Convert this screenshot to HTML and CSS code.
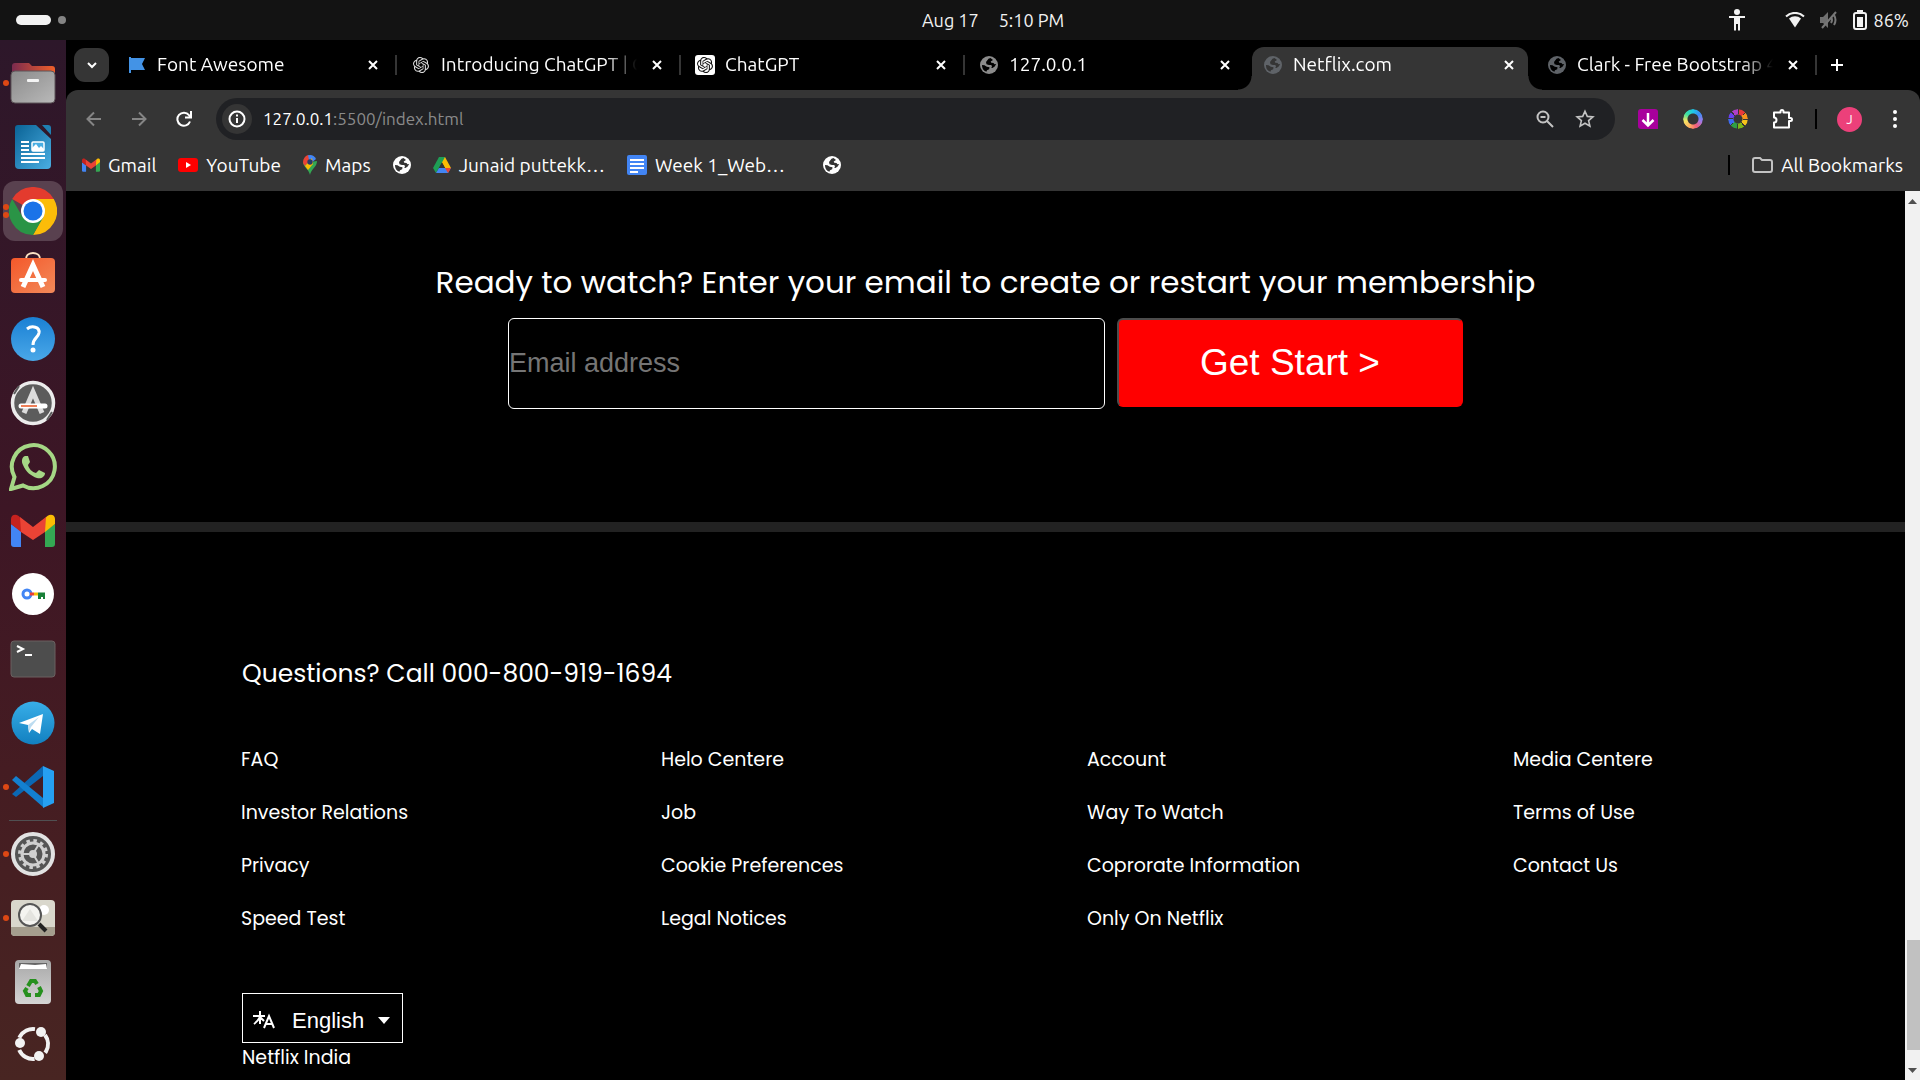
FILE: index.html
```html
<!DOCTYPE html>
<html lang="en">
<head>
<meta charset="utf-8">
<title>Netflix.com</title>
<link rel="stylesheet" href="styles.css">
</head>
<body>
<svg class="defs" aria-hidden="true">
  <defs>
    <symbol id="globe" viewBox="0 0 18 18"><circle cx="9" cy="9" r="9" fill="currentColor"/><path d="M10.500 2 8.500 2.800 6 6l.5 2.200 2.500.8 2.300 0 .7 1.500-.8 1.300 1.300.2 2.200-1.500 1.500-2.500-1.700.3-1-1.300-2.200-.3-.6-1.200 2.300-1.500ZM2 9l2.500.3 2.300 1.500 2.700.5-.3 2-2.200 1-.6 1.500A7 7 0 0 1 2 9Z" fill="var(--hole)"/></symbol>
    <symbol id="close" viewBox="0 0 12 12"><path d="M2 2l8 8M10 2l-8 8" stroke="currentColor" stroke-width="2" fill="none"/></symbol>
    <symbol id="openai" viewBox="0 0 24 24"><path fill="currentColor" d="M22.2819 9.8211a5.9847 5.9847 0 0 0-.5157-4.9108 6.0462 6.0462 0 0 0-6.5098-2.9A6.0651 6.0651 0 0 0 4.9807 4.1818a5.9847 5.9847 0 0 0-3.9977 2.9 6.0462 6.0462 0 0 0 .7427 7.0966 5.98 5.98 0 0 0 .511 4.9107 6.051 6.051 0 0 0 6.5146 2.9001A5.9847 5.9847 0 0 0 13.2599 24a6.0557 6.0557 0 0 0 5.7718-4.2058 5.9894 5.9894 0 0 0 3.9977-2.9001 6.0557 6.0557 0 0 0-.7475-7.073zm-9.022 12.6081a4.4755 4.4755 0 0 1-2.8764-1.0408l.1419-.0804 4.7783-2.7582a.7948.7948 0 0 0 .3927-.6813v-6.7369l2.02 1.1686a.071.071 0 0 1 .038.052v5.5826a4.504 4.504 0 0 1-4.4945 4.4944zm-9.6607-4.1254a4.4708 4.4708 0 0 1-.5346-3.0137l.142.0852 4.783 2.7582a.7712.7712 0 0 0 .7806 0l5.8428-3.3685v2.3324a.0804.0804 0 0 1-.0332.0615L9.74 19.9502a4.4992 4.4992 0 0 1-6.1408-1.6464zM2.3408 7.8956a4.485 4.485 0 0 1 2.3655-1.9728V11.6a.7664.7664 0 0 0 .3879.6765l5.8144 3.3543-2.0201 1.1685a.0757.0757 0 0 1-.071 0l-4.8303-2.7865A4.504 4.504 0 0 1 2.3408 7.872zm16.5963 3.8558L13.1038 8.364 15.1192 7.2a.0757.0757 0 0 1 .071 0l4.8303 2.7913a4.4944 4.4944 0 0 1-.6765 8.1042v-5.6772a.79.79 0 0 0-.407-.667zm2.0107-3.0231l-.142-.0852-4.7735-2.7818a.7759.7759 0 0 0-.7854 0L9.409 9.2297V6.8974a.0662.0662 0 0 1 .0284-.0615l4.8303-2.7866a4.4992 4.4992 0 0 1 6.6802 4.66zM8.3065 12.863l-2.02-1.1638a.0804.0804 0 0 1-.038-.0567V6.0742a4.4992 4.4992 0 0 1 7.3757-3.4537l-.142.0805L8.704 5.459a.7948.7948 0 0 0-.3927.6813zm1.0976-2.3654l2.602-1.4998 2.6069 1.4998v2.9994l-2.5974 1.4997-2.6067-1.4997Z"/></symbol>
    <symbol id="gmail" viewBox="0 0 44 33"><path d="M0 10v20a3 3 0 0 0 3 3h7V17Z" fill="#4285f4"/><path d="M34 17v16h7a3 3 0 0 0 3-3V10Z" fill="#34a853"/><path d="M0 5v5l10 8V5C7-1 0 0 0 5Z" fill="#c5221f"/><path d="M44 5v5l-10 8V5c3-6 10-5 10 0Z" fill="#fbbc04"/><path d="M9 3l13 10L35 3l-1 15-12 8-12-8Z" fill="#ea4335"/></symbol>
    <linearGradient id="g-grey" x1="0" y1="0" x2="1" y2="1"><stop offset="0" stop-color="#8b8b8b"/><stop offset="1" stop-color="#b9b9b9"/></linearGradient>
    <linearGradient id="g-folder"><stop offset="0" stop-color="#7b2a4e"/><stop offset="1" stop-color="#f0602a"/></linearGradient>
    <linearGradient id="g-orange" x1="0" y1="0" x2="1" y2="1"><stop offset="0" stop-color="#f4582a"/><stop offset="1" stop-color="#f28a5a"/></linearGradient>
    <linearGradient id="g-blue" x1="0" y1="0" x2="0" y2="1"><stop offset="0" stop-color="#1a80d4"/><stop offset="1" stop-color="#4aa8e8"/></linearGradient>
    <linearGradient id="g-tg" x1="0" y1="0" x2="0" y2="1"><stop offset="0" stop-color="#38aee8"/><stop offset="1" stop-color="#1280c0"/></linearGradient>
    <linearGradient id="g-doc" x1="0" y1="0" x2="1" y2="1"><stop offset="0" stop-color="#0a6396"/><stop offset="1" stop-color="#4aaee2"/></linearGradient>
    <linearGradient id="g-trash" x1="0" y1="0" x2="0" y2="1"><stop offset="0" stop-color="#a8a8a8"/><stop offset="1" stop-color="#d4d4d4"/></linearGradient>
  </defs>
</svg>

<header class="topbar">
  <div class="workspaces"><span class="pill"></span><span class="dot"></span></div>
  <div class="clock"><span>Aug 17</span><span>5:10 PM</span></div>
  <div class="status">
    <svg class="access" width="16" height="22" viewBox="0 0 16 22"><circle cx="8" cy="3" r="3" fill="#f2f2f2"/><path d="M0 7h16v2h-5V21.500H9V15H7v6.500H5V9H0Z" fill="#f2f2f2"/></svg>
    <svg width="20" height="16" viewBox="0 0 20 16"><path d="M4 6.500a9 9 0 0 1 12 0L10 15.500Z" fill="#f2f2f2"/><path d="M1 4.500a13 13 0 0 1 18 0" fill="none" stroke="#f2f2f2" stroke-width="2"/></svg>
    <svg class="mute" width="20" height="18" viewBox="0 0 20 18"><path d="M1 6h3l5-5v16l-5-5H1Z" fill="#6f6f6f"/><path d="M12 6q2 3 0 6M15 4q3 5 0 10M3 17 17 1" fill="none" stroke="#777" stroke-width="2"/></svg>
    <svg width="14" height="20" viewBox="0 0 14 20"><rect x="1" y="3" width="12" height="16" rx="2" fill="none" stroke="#f2f2f2" stroke-width="2"/><rect x="4" y="0" width="6" height="3" fill="#f2f2f2"/><rect x="4" y="7" width="6" height="10" fill="#f2f2f2"/></svg>
    <span>86%</span>
  </div>
</header>

<div class="desktop">
  <nav class="dock" aria-label="Dock">
    <button class="app run1" aria-label="Files"><svg viewBox="0 0 48 48"><path d="M3 20V7q0-3 3-3h14l3 3h20q3 0 3 3v10Z" fill="url(#g-folder)"/><rect x="2" y="12" width="44" height="32" rx="4" fill="url(#g-grey)" stroke="#5d5558"/><rect x="18" y="20" width="12" height="3" rx="1" fill="#f4f4f4"/></svg></button>
    <button class="app" aria-label="Writer"><svg viewBox="0 0 48 48"><path d="M9 2h18l15 14v26q0 4-4 4H10q-4 0-4-4V5q0-3 3-3Z" fill="url(#g-doc)"/><path d="M33 2h6q3 0 3 3v7Z" fill="#1f7fb2"/><path d="M12 19h8M12 23h8M12 27h8M12 31h24M12 35h24M12 39h18" stroke="#fff" stroke-width="2"/><rect x="23" y="19" width="12" height="9" rx="1" fill="#4aaee2" stroke="#fff" stroke-width="1.500"/><path d="M23 28v-3l4-4 3 4 2-2 3 3v2Z" fill="#fff"/></svg></button>
    <button class="app run2 current" aria-label="Chrome"><svg viewBox="0 0 48 48"><path d="M24 24 3.200 12A24 24 0 0 1 44.800 12Z" fill="#e33b2e"/><path d="M24 24V12h20.800A24 24 0 0 1 24 48l10-18Z" fill="#fbbc09"/><path d="M24 24l10.400 6L24 48A24 24 0 0 1 3.200 12l10.400 18Z" fill="#2a9446"/><circle cx="24" cy="24" r="12" fill="#fff"/><circle cx="24" cy="24" r="9.500" fill="#1a73e8"/></svg></button>
    <button class="app" aria-label="App Center"><svg viewBox="0 0 48 48"><path d="M17 8c0-8 14-8 14 0" fill="none" stroke="#fbe3c4" stroke-width="2"/><rect x="2" y="7" width="44" height="35" rx="4" fill="url(#g-orange)"/><path d="M14 36 24 14l10 22" fill="none" stroke="#fff" stroke-width="5"/><path d="M12 29h24" stroke="#fff" stroke-width="4" stroke-linecap="round"/></svg></button>
    <button class="app" aria-label="Help"><svg viewBox="0 0 48 48"><circle cx="24" cy="24" r="22" fill="url(#g-blue)"/><path d="M18 14c5-4 13-2 12 4-1 5-6 5-6 12" fill="none" stroke="#fff" stroke-width="3"/><circle cx="24" cy="35" r="2.500" fill="#fff"/></svg></button>
    <button class="app" aria-label="Software Updater"><svg viewBox="0 0 48 48"><circle cx="24" cy="24" r="20.500" fill="#5c5c5c" stroke="#ececec" stroke-width="3.500"/><path d="M5 15l5-8M38 41l5-8" stroke="#5c5c5c" stroke-width="2"/><path d="M15 34 24 13l9 21" fill="none" stroke="#dcdcdc" stroke-width="5"/><path d="M12 27h24" stroke="#fff" stroke-width="5" stroke-linecap="round"/><path d="M12 27h16" stroke="#e95420" stroke-width="1.500"/></svg></button>
    <button class="app" aria-label="WhatsApp"><svg viewBox="0 0 48 48"><path d="M2 46l3.500-12A21.500 21.500 0 1 1 14 42.500Z" fill="none" stroke="#a5d785" stroke-width="4"/><path d="M16 13c-3 1-4 5-2 9 3 7 8 11 14 13 4 1 8-1 8-5l-6-3-3 3c-4-1-7-4-8-8l2-3-2-6Z" fill="#a5d785"/></svg></button>
    <button class="app" aria-label="Gmail"><svg viewBox="0 0 48 48"><use href="#gmail" x="2" y="7" width="44" height="33"/></svg></button>
    <button class="app" aria-label="Password Manager"><svg viewBox="0 0 48 48"><circle cx="24" cy="23" r="21" fill="#fff"/><circle cx="18" cy="23" r="4" fill="none" stroke="#4285f4" stroke-width="3"/><path d="M21 23h4" stroke="#ea4335" stroke-width="3"/><path d="M25 23h4" stroke="#fbbc04" stroke-width="3"/><path d="M29 21.500h7V28h-2v-2h-2v2h-3Z" fill="#188038"/></svg></button>
    <button class="app" aria-label="Terminal"><svg viewBox="0 0 48 48"><rect x="2" y="6" width="44" height="36" rx="3" fill="#4d4d4d" stroke="#6b6060"/><path d="M8 11l6 3-6 3M16 20h7" fill="none" stroke="#fff" stroke-width="2"/></svg></button>
    <button class="app" aria-label="Telegram"><svg viewBox="0 0 48 48"><circle cx="24" cy="24" r="21.500" fill="url(#g-tg)"/><path d="M10 24 34 15l-3 20-8-5-3 4-1-8Z" fill="#fff"/><path d="M19 26l11-8-8 10-2 5Z" fill="#bcdcf0"/></svg></button>
    <button class="app run1" aria-label="VS Code"><svg viewBox="0 0 48 48"><path d="M3 31 34 3v10L7 34Z" fill="#0b68b4"/><path d="M3 17l4-4 27 22v9Z" fill="#1380d0"/><path d="M34 3l11 5v32l-11 5Z" fill="#26a0f2"/></svg></button>
    <hr>
    <button class="app run1" aria-label="Settings"><svg viewBox="0 0 48 48"><circle cx="24" cy="24" r="20" fill="#555" stroke="#e2e2e2" stroke-width="4"/><circle cx="24" cy="24" r="13.500" fill="none" stroke="#d0d0d0" stroke-width="3" stroke-dasharray="3.500 3.568"/><circle cx="24" cy="24" r="11" fill="none" stroke="#d0d0d0" stroke-width="3"/><circle cx="24" cy="24" r="4" fill="#d0d0d0"/><path d="M24 24H13M24 24l6-10M24 24l6 10" stroke="#d0d0d0" stroke-width="2"/></svg></button>
    <button class="app run1" aria-label="Image Viewer"><svg viewBox="0 0 48 48"><rect x="2" y="6" width="44" height="36" rx="4" fill="#d9d7cc"/><path d="M2 33h44v5q0 4-4 4H6q-4 0-4-4Z" fill="#a59e8e"/><circle cx="35" cy="16" r="5" fill="#fff"/><circle cx="21" cy="21" r="11" fill="#f4f4f0" stroke="#555" stroke-width="2"/><path d="M13 27l8-12 8 12Z" fill="#e4e4df"/><path d="M30 30l7 7" stroke="#222" stroke-width="4"/></svg></button>
    <button class="app" aria-label="Trash"><svg viewBox="0 0 48 48"><rect x="6" y="2" width="36" height="44" rx="4" fill="url(#g-trash)"/><path d="M10 10V5h28v5Z" fill="#666"/><path d="M10 11l2-5 14 1 11-1 1 5Z" fill="#fff"/><g fill="none" stroke="#26901e" stroke-width="4"><path d="M19 28l3-5h4l2 3"/><path d="M30 29l2 4-2 4h-4"/><path d="M22 37h-4l-2-4 2-3"/></g></svg></button>
    <button class="app apps" aria-label="Show Apps"><svg viewBox="0 0 48 48"><circle cx="24" cy="24" r="15" fill="none" stroke="#f2f2f2" stroke-width="4" stroke-dasharray="19 12.400" stroke-dashoffset="-6" transform="rotate(-60 24 24)"/><circle cx="11" cy="23" r="5" fill="#f2f2f2"/><circle cx="32" cy="12" r="5" fill="#f2f2f2"/><circle cx="30" cy="36" r="5" fill="#f2f2f2"/></svg></button>
  </nav>

  <div class="browser">
    <div class="tabstrip">
      <button class="tabsearch" aria-label="Search tabs"><svg width="12" height="12" viewBox="0 0 12 12"><path d="M2 4l4 4 4-4" fill="none" stroke="#fff" stroke-width="2"/></svg></button>
      <div class="tabs">
        <div class="tab"><span class="fav"><svg width="16" height="16" viewBox="0 0 16 16"><path d="M0 0h2v1h14l-3 6 3 6H2v3H0Z" fill="#4393e6"/></svg></span><span class="name">Font Awesome</span><button aria-label="Close tab"><svg><use href="#close"/></svg></button></div>
        <div class="tab"><span class="fav"><svg width="16" height="16" color="#ddd"><use href="#openai"/></svg></span><span class="name">Introducing ChatGPT | O</span><button aria-label="Close tab"><svg><use href="#close"/></svg></button></div>
        <div class="tab"><span class="fav boxed"><svg width="16" height="16" color="#111"><use href="#openai"/></svg></span><span class="name">ChatGPT</span><button aria-label="Close tab"><svg><use href="#close"/></svg></button></div>
        <div class="tab"><span class="fav grey"><svg width="18" height="18"><use href="#globe"/></svg></span><span class="name">127.0.0.1</span><button aria-label="Close tab"><svg><use href="#close"/></svg></button></div>
        <div class="tab active"><span class="fav dim"><svg width="18" height="18"><use href="#globe"/></svg></span><span class="name">Netflix.com</span><button aria-label="Close tab"><svg><use href="#close"/></svg></button></div>
        <div class="tab"><span class="fav slate"><svg width="18" height="18"><use href="#globe"/></svg></span><span class="name">Clark - Free Bootstrap 4</span><button aria-label="Close tab"><svg><use href="#close"/></svg></button></div>
      </div>
      <button class="newtab" aria-label="New tab"><svg width="14" height="14" viewBox="0 0 14 14"><path d="M7 1v12M1 7h12" stroke="#fff" stroke-width="2"/></svg></button>
    </div>

    <div class="chrome">
      <div class="toolbar">
        <button class="tool" aria-label="Back"><svg width="16" height="16" viewBox="0 0 16 16"><path d="M15 8H2M8 1.500 1.500 8 8 14.500" fill="none" stroke="#858585" stroke-width="2"/></svg></button>
        <button class="tool" aria-label="Forward"><svg width="16" height="16" viewBox="0 0 16 16"><path d="M1 8h13M8 1.500 14.500 8 8 14.500" fill="none" stroke="#858585" stroke-width="2"/></svg></button>
        <button class="tool" aria-label="Reload"><svg width="16" height="16" viewBox="0 0 16 16"><path d="M14 10.500A6.500 6.500 0 1 1 13 4.200L15 6.500M15 0v6.500H9" fill="none" stroke="#fff" stroke-width="2"/></svg></button>
        <div class="omnibox">
          <span class="info"><svg width="18" height="18" viewBox="0 0 18 18"><circle cx="9" cy="9" r="7.500" fill="none" stroke="#fff" stroke-width="2"/><path d="M9 8v5M9 4.500v2" stroke="#fff" stroke-width="2"/></svg></span>
          <span class="url">127.0.0.1<span>:5500/index.html</span></span>
          <button class="tool" aria-label="Zoom"><svg width="18" height="18" viewBox="0 0 18 18"><circle cx="7" cy="7" r="5.500" fill="none" stroke="#c3c3c3" stroke-width="2"/><path d="M11 11l6 6M4.500 7h5" stroke="#c3c3c3" stroke-width="2"/></svg></button>
          <button class="tool star" aria-label="Bookmark"><svg width="20" height="20" viewBox="0 0 20 20"><path d="M10 2.200l2.300 5.200 5.600.5-4.300 3.700 1.300 5.500L10 14.200l-4.900 2.900 1.300-5.500-4.300-3.700 5.600-.5Z" fill="none" stroke="#c3c3c3" stroke-width="1.600"/></svg></button>
        </div>
        <button class="tool" aria-label="Downloader"><svg width="20" height="20" viewBox="0 0 20 20"><path d="M3 0h14q3 0 3 3v17H3q-3 0-3-3V3q0-3 3-3Z" fill="#a8009c"/><path d="M10 4v12M4.500 11l5.500 5.500L15.500 11" fill="none" stroke="#fff" stroke-width="2.500"/></svg></button>
        <button class="tool" aria-label="Color ring"><span class="ring"></span></button>
        <button class="tool" aria-label="Color wheel"><span class="ring wheel"></span></button>
        <button class="tool" aria-label="Extensions"><svg width="22" height="22" viewBox="0 0 22 22"><path d="M2 4.500h6.500V3.500a1.500 1.500 0 0 1 3 0v1H17V10h1.500a1.500 1.500 0 0 1 0 3H17v6.500H2v-5a2.500 2.500 0 0 0 0-5Z" fill="none" stroke="#fff" stroke-width="2" stroke-linejoin="round"/></svg></button>
        <span class="rule"></span>
        <button class="tool" aria-label="Profile"><span class="avatar">J</span></button>
        <button class="tool" aria-label="Menu"><svg width="4" height="18" viewBox="0 0 4 18" fill="#fff"><circle cx="2" cy="2" r="2"/><circle cx="2" cy="9" r="2"/><circle cx="2" cy="16" r="2"/></svg></button>
      </div>
      <nav class="bookmarks" aria-label="Bookmarks">
        <a href="#"><svg width="18" height="14"><use href="#gmail"/></svg>Gmail</a>
        <a href="#"><svg width="20" height="14" viewBox="0 0 20 14"><rect width="20" height="14" rx="3" fill="#f00"/><path d="M8 4l5 3-5 3Z" fill="#fff"/></svg>YouTube</a>
        <a href="#" class="maps"><svg width="14" height="20" viewBox="0 0 14 20"><path d="M7 20C6 14 0 12 0 7h7l7-1c0 6-6 8-7 14Z" fill="#34a853"/><path d="M0 7c0-3 2-6 5-7l4 3-7 8Q0 9 0 7Z" fill="#ea4335"/><path d="M5 .300A7 7 0 0 1 13 4L7 9Z" fill="#4285f4"/><path d="M2 11l7-8 1 6-5 6Z" fill="#fbbc04"/><circle cx="7" cy="7" r="2.700" fill="#2b3a67"/></svg>Maps</a>
        <a href="#" aria-label="Site"><svg width="18" height="18"><use href="#globe"/></svg></a>
        <a href="#"><svg width="18" height="16" viewBox="0 0 18 16"><path d="M6 0h6l6 11h-6Z" fill="#fbbc04"/><path d="M6 0h6L9 5.500 3 16l-3-5Z" fill="#1e9e55"/><path d="M6 11h12l-3 5H3Z" fill="#4285f4"/><path d="M18 11l-3 5-3-5Z" fill="#ea4335"/><path d="M9 5.500 12 11H6Z" fill="#353535"/></svg>Junaid puttekk…</a>
        <a href="#"><svg width="20" height="20" viewBox="0 0 20 20"><rect width="20" height="20" rx="2" fill="#4285f4"/><path d="M3 5h14M3 9h14M3 13h14M3 17h8" stroke="#fff" stroke-width="2"/></svg>Week 1_Web…</a>
        <a href="#" class="last" aria-label="Site"><svg width="18" height="18"><use href="#globe"/></svg></a>
        <span class="rule"></span>
        <a href="#" class="all"><svg width="21" height="16" viewBox="0 0 21 16"><path d="M1 3q0-2 2-2h5l2 2h8q2 0 2 2v8q0 2-2 2H3q-2 0-2-2Z" fill="none" stroke="#c3c3c3" stroke-width="2"/></svg>All Bookmarks</a>
      </nav>
    </div>

    <div class="viewport">
      <main class="page">
        <section class="signup">
          <h2><label for="email">Ready to watch? Enter your email to create or restart your membership</label></h2>
          <form>
            <input id="email" type="email" placeholder="Email address">
            <button type="button">Get Start &gt;</button>
          </form>
        </section>
        <footer class="footer">
          <p class="call">Questions? Call 000-800-919-1694</p>
          <div class="links">
            <ul><li><a href="#">FAQ</a></li><li><a href="#">Investor Relations</a></li><li><a href="#">Privacy</a></li><li><a href="#">Speed Test</a></li></ul>
            <ul><li><a href="#">Helo Centere</a></li><li><a href="#">Job</a></li><li><a href="#">Cookie Preferences</a></li><li><a href="#">Legal Notices</a></li></ul>
            <ul><li><a href="#">Account</a></li><li><a href="#">Way To Watch</a></li><li><a href="#">Coprorate Information</a></li><li><a href="#">Only On Netflix</a></li></ul>
            <ul><li><a href="#">Media Centere</a></li><li><a href="#">Terms of Use</a></li><li><a href="#">Contact Us</a></li></ul>
          </div>
          <div class="lang">
            <svg width="22" height="18" viewBox="0 0 22 18"><path d="M0 5h12M7 0v13M7 6Q5 10 1 13M7 6l4 4M11 17l5-12 5 12M13 13h6" fill="none" stroke="#fff" stroke-width="2"/></svg>
            <select aria-label="Language"><option>English</option></select>
            <svg width="12" height="7" viewBox="0 0 12 7"><path d="M0 0h12L6 7Z" fill="#fff"/></svg>
          </div>
          <p class="country">Netflix India</p>
        </footer>
      </main>
      <div class="scrollbar">
        <svg width="9" height="5" viewBox="0 0 9 5"><path d="M0 5h9L4.500 0Z" fill="#505050"/></svg>
        <div class="track"><span class="thumb"></span></div>
        <svg width="9" height="5" viewBox="0 0 9 5"><path d="M0 0h9L4.500 5Z" fill="#505050"/></svg>
      </div>
    </div>
  </div>
</div>
</body>
</html>
```
FILE: styles.css
```css
* { box-sizing: border-box; }
body {
  --ui: Ubuntu, "Noto Sans", sans-serif;
  --bar: #353535;
  margin: 0;
  min-height: 100vh;
  display: flex;
  flex-direction: column;
  background: #000;
  color: #fff;
  font: 18px/24px var(--ui);
}
button { padding: 0; border: 0; background: none; color: inherit; font: inherit; }
a { color: inherit; text-decoration: none; }
svg { flex: none; }
.defs { position: absolute; width: 0; height: 0; }

/* System bar */
.topbar {
  display: grid;
  grid-template-columns: 66px 1fr auto 1fr;
  align-items: center;
  height: 40px;
  background: #131313;
  color: #f2f2f2;
}
.workspaces { display: flex; align-items: center; gap: 7px; padding-left: 16px; }
.pill { width: 36px; height: 10px; border-radius: 5px; background: #f2f2f2; }
.dot { width: 8px; height: 8px; border-radius: 50%; background: #848484; }
.clock { grid-column: 3; display: flex; gap: 20px; }
.status { display: flex; justify-content: flex-end; align-items: center; gap: 14px; padding-right: 11px; }
.status .access { margin-right: 26px; }
.status span { margin-left: -7px; }

/* Dock */
.desktop { flex: 1; display: flex; }
.dock {
  flex: none;
  display: flex;
  flex-direction: column;
  align-items: center;
  width: 66px;
  padding-top: 11px;
  background: linear-gradient(#2d172a, #3d1625 45%, #451c22 70%, #482522);
}
.app {
  position: relative;
  display: grid;
  place-items: center;
  width: 60px;
  height: 60px;
  margin: 2px 0;
  border-radius: 12px;
}
.app svg { width: 48px; height: 48px; }
.current { background: #59414f; }
.run1::before, .run2::before {
  content: "";
  position: absolute;
  left: 0;
  top: 27px;
  width: 6px;
  height: 6px;
  border-radius: 50%;
  background: #dd4814;
}
.run2::before { top: 23px; box-shadow: 0 8px #dd4814; }
.apps { margin: 0; }
.dock hr { width: 48px; height: 1px; margin: 1px 0; border: 0; background: #505052; }

/* Tabs */
.browser { flex: 1; min-width: 0; display: flex; flex-direction: column; }
.tabstrip { display: flex; align-items: center; height: 50px; padding-left: 8px; }
.tabsearch {
  display: grid;
  place-items: center;
  flex: none;
  width: 35px;
  height: 34px;
  margin-right: 4px;
  border-radius: 11px;
  background: var(--bar);
}
.tabs { display: flex; flex: 0 1 1704px; align-self: stretch; min-width: 0; }
.tab {
  position: relative;
  flex: 1;
  min-width: 0;
  display: flex;
  align-items: center;
  gap: 10px;
  padding: 0 18px 0 14px;
  font-size: 19px;
}
.tab > * { position: relative; }
.tab::after {
  content: "";
  position: absolute;
  right: 0;
  top: 15px;
  width: 2px;
  height: 20px;
  background: #353535;
}
.fav { display: grid; place-items: center; width: 20px; height: 20px; --hole: #000; }
.boxed { background: #fff; border-radius: 3px; }
.grey { color: #8b8b8b; }
.dim { color: #5f6368; --hole: #353535; }
.slate { color: #5f6368; }
.name {
  flex: 1;
  padding-bottom: 2px;
  overflow: hidden;
  white-space: nowrap;
  mask-image: linear-gradient(to right, #000 calc(100% - 32px), transparent);
}
.tab button { display: grid; place-items: center; width: 12px; height: 12px; margin-left: 4px; }
.tab button svg { width: 12px; height: 12px; }
.tab.active::before {
  content: "";
  position: absolute;
  inset: 7px 5px 0 3px;
  border-radius: 12px 12px 0 0;
  background: var(--bar);
}
.tab.active::after {
  left: -11px;
  right: -9px;
  top: auto;
  bottom: 0;
  width: auto;
  height: 14px;
  background:
    radial-gradient(circle at 0 0, transparent 13px, var(--bar) 14px) left / 14px 14px no-repeat,
    radial-gradient(circle at 100% 0, transparent 13px, var(--bar) 14px) right / 14px 14px no-repeat;
}
.tab:has(+ .active)::after { display: none; }
.newtab { display: grid; margin-left: 13px; }

/* Toolbar */
.chrome { height: 101px; border-radius: 12px 12px 0 0; background: var(--bar); }
.toolbar { display: flex; align-items: center; height: 58px; padding: 0 3px 0 5px; }
.tool { display: grid; place-items: center; flex: none; width: 45px; height: 45px; }
.omnibox {
  flex: 1;
  display: flex;
  align-items: center;
  height: 42px;
  margin: 0 10px;
  padding: 0 10px 0 6px;
  border-radius: 21px;
  background: #202124;
}
.omnibox .tool { width: 40px; }
.info { display: grid; place-items: center; width: 30px; height: 30px; border-radius: 50%; background: #353535; }
.url { flex: 1; margin-left: 11px; font-size: 17px; }
.url span { color: #8b8b8b; }
.ring {
  width: 20px;
  height: 20px;
  border-radius: 50%;
  background: conic-gradient(#1fc8e8, #3a8cf5, #9b7bea, #f25c7a, #ffb060, #f5e663, #3be0a0, #1fc8e8);
  mask: radial-gradient(circle, transparent 5px, #000 6px);
}
.wheel {
  background:
    repeating-conic-gradient(#353535 0 6deg, transparent 6deg 45deg),
    conic-gradient(#ea3a3a 45deg, #f7941d 0 90deg, #f6c21a 0 135deg, #7cb518 0 180deg, #2f9e44 0 225deg, #3d6bf0 0 270deg, #6a3ff0 0 315deg, #b03fc8 0);
  mask: radial-gradient(circle, transparent 4px, #000 5px);
}
.rule { flex: none; width: 2px; height: 20px; background: #000; }
.toolbar .rule { margin: 0 10px; }
.avatar {
  display: grid;
  place-items: center;
  width: 25px;
  height: 25px;
  border-radius: 50%;
  background: #ec407a;
  font-size: 13px;
}
.bookmarks { display: flex; align-items: center; gap: 22px; height: 34px; padding: 0 17px 0 16px; }
.bookmarks a { display: flex; align-items: center; gap: 8px; white-space: nowrap; font-size: 19px; --hole: #353535; }
.bookmarks .last { margin-left: 16px; margin-right: auto; }

/* Page */
.viewport { flex: 1; display: flex; }
.page { flex: 1; min-width: 0; font-family: Poppins, Inter, sans-serif; }
.signup { padding: 67px 32px 113px; border-bottom: 10px solid #222; }
.signup h2 { margin: 0 0 12px; font-weight: 400; font-size: 31px; line-height: 48px; text-align: center; }
.signup form {
  display: grid;
  grid-template-columns: 597fr 346fr;
  gap: 12px;
  align-items: start;
  max-width: 955px;
  margin: 0 auto;
}
.signup input {
  width: 100%;
  height: 91px;
  padding: 0;
  border: 1px solid #fff;
  border-radius: 6px;
  background: #000;
  color: #fff;
  font: 27px "Liberation Sans", sans-serif;
}
.signup input::placeholder { color: #757575; }
.signup form button {
  height: 89px;
  border: 2px solid;
  border-color: #4c4c4c #f00 #f00 #4c4c4c;
  border-radius: 6px;
  background: #f00;
  font: 37px "Liberation Sans", sans-serif;
}
.footer { padding: 123px 0 8px 176px; }
.footer p { margin: 0; }
.call { font-size: 25px; line-height: 38px; }
.links { display: grid; grid-template-columns: 420fr 426fr 426fr 392fr; margin: 43px 0 0 -1px; font-size: 19px; }
.links ul { margin: 0; padding: 0; list-style: none; }
.links li { height: 53px; line-height: 48px; }
.lang {
  display: flex;
  align-items: center;
  gap: 12px;
  width: 161px;
  height: 50px;
  margin-top: 45px;
  padding: 4px 12px 0 10px;
  border: 1px solid #fff;
}
.lang select {
  appearance: none;
  flex: 1;
  min-width: 0;
  padding: 0 0 0 5px;
  border: 0;
  background: none;
  color: #fff;
  font: 22px "Liberation Sans", sans-serif;
}
.country { font-size: 19px; line-height: 30px; }

/* Scrollbar */
.scrollbar { display: flex; flex-direction: column; align-items: center; width: 15px; padding: 8px 0; background: #f1f1f1; }
.track { flex: 1; width: 100%; display: flex; flex-direction: column; justify-content: flex-end; align-items: flex-end; padding-bottom: 18px; }
.thumb { width: 13px; height: 13%; background: #c1c1c1; }
```
